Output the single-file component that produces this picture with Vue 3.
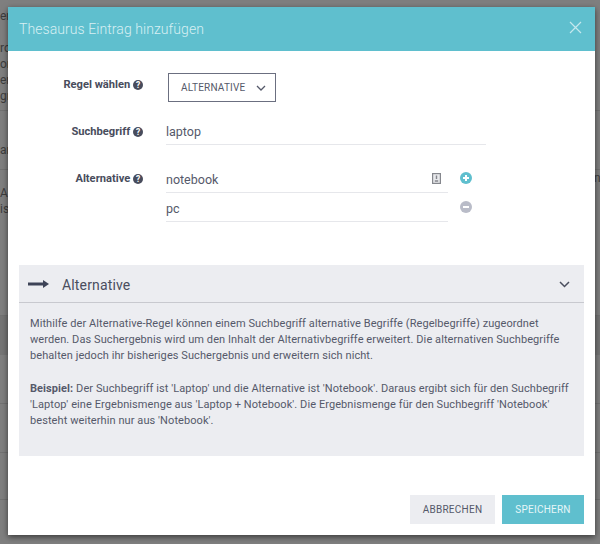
<script setup>
const rows = [
  { value: 'notebook', add: true },
  { value: 'pc', add: false },
]
</script>

<template>
  <div class="page">
    <div class="backdrop">
      <div class="bg-frag f1">en</div>
      <div class="bg-frag f2">ro<br />or<br />er<br />gr</div>
      <div class="bg-frag f3">ar</div>
      <div class="bg-frag f4">Al<br />is</div>
      <div class="bg-frag f5">n</div>
      <div class="bg-band"></div>
      <div class="bg-line l1"></div>
      <div class="bg-line l2"></div>
      <div class="bg-line l3"></div>
      <div class="bg-line l4"></div>
      <div class="bg-line l5"></div>
      <div class="bg-line l6"></div>
    </div>
    <div class="modal">
      <header class="head">
        <h1 class="title">Thesaurus Eintrag hinzufügen</h1>
        <svg class="close" width="13" height="13" viewBox="0 0 13 13">
          <path d="M1 1l11 11M12 1L1 12" fill="none" stroke="currentColor" stroke-width="1.2" />
        </svg>
      </header>
      <div class="body">
        <div class="form">
          <div class="row row-rule">
            <label class="lab">Regel wählen <span class="help">?</span></label>
            <div class="select">
              <span>ALTERNATIVE</span>
              <svg width="10" height="6" viewBox="0 0 10 6"><path d="M1 1l4 4 4-4" fill="none" stroke="currentColor" stroke-width="1.3" /></svg>
            </div>
          </div>
          <div class="row row-term">
            <label class="lab">Suchbegriff <span class="help">?</span></label>
            <div class="input wide">laptop</div>
          </div>
          <div class="row row-alt">
            <label class="lab">Alternative <span class="help">?</span></label>
            <div class="alts">
              <div v-for="r in rows" :key="r.value" class="alt">
                <div class="input narrow">
                  <span>{{ r.value }}</span>
                  <svg v-if="r.add" class="doc" width="9" height="11" viewBox="0 0 9 11">
                    <rect x="0.6" y="0.6" width="7.8" height="9.8" fill="#e8e9ec" stroke="#85878d" stroke-width="1.2" />
                    <path d="M4.5 2.5v3.5M2.8 8h3.4" stroke="#85878d" stroke-width="1.4" fill="none" />
                  </svg>
                </div>
                <span class="round" :class="r.add ? 'plus' : 'minus'">
                  <svg width="12" height="12" viewBox="0 0 12 12">
                    <circle cx="6" cy="6" r="6" fill="currentColor" />
                    <path v-if="r.add" d="M3 6h6M6 3v6" stroke="#fff" stroke-width="2" />
                    <path v-else d="M3 6h6" stroke="#fff" stroke-width="2" />
                  </svg>
                </span>
              </div>
            </div>
          </div>
        </div>
        <section class="panel">
          <div class="panel-head">
            <svg class="arrow" width="21" height="8" viewBox="0 0 21 8">
              <path d="M0 4h16" stroke="currentColor" stroke-width="3" />
              <path d="M15 0l6 4-6 4z" fill="currentColor" />
            </svg>
            <span class="panel-title">Alternative</span>
            <svg class="chev" width="11" height="7" viewBox="0 0 11 7"><path d="M1 1l4.5 4.5L10 1" fill="none" stroke="currentColor" stroke-width="1.5" /></svg>
          </div>
          <div class="panel-body">
            <p>Mithilfe der Alternative-Regel können einem Suchbegriff alternative Begriffe (Regelbegriffe) zugeordnet werden. Das Suchergebnis wird um den Inhalt der Alternativbegriffe erweitert. Die alternativen Suchbegriffe behalten jedoch ihr bisheriges Suchergebnis und erweitern sich nicht.</p>
            <p><b>Beispiel:</b> Der Suchbegriff ist 'Laptop' und die Alternative ist 'Notebook'. Daraus ergibt sich für den Suchbegriff 'Laptop' eine Ergebnismenge aus 'Laptop + Notebook'. Die Ergebnismenge für den Suchbegriff 'Notebook' besteht weiterhin nur aus 'Notebook'.</p>
          </div>
        </section>
        <footer class="foot">
          <button class="btn cancel">ABBRECHEN</button>
          <button class="btn save">SPEICHERN</button>
        </footer>
      </div>
    </div>
  </div>
</template>

<style>
html, body { margin: 0; background: #7f7f7f; }
</style>

<style scoped>
.page {
  position: relative;
  width: 600px;
  height: 544px;
  overflow: hidden;
  background: #7f7f7f;
  font-family: Roboto, "Liberation Sans", sans-serif;
  color: #4a4e5e;
  box-sizing: border-box;
  padding: 7px 5px 9px 8px;
}
.backdrop { position: absolute; inset: 0; color: #3d3d3d; font-size: 12px; line-height: 16px; }
.bg-frag { position: absolute; left: 0; }
.f1 { top: 8px; }
.f2 { top: 40px; }
.f3 { top: 142px; }
.f4 { top: 185px; }
.f5 { top: 170px; left: 594px; }
.bg-band { position: absolute; left: 0; right: 0; top: 315px; height: 40px; background: #757575; }
.bg-line { position: absolute; left: 0; right: 0; height: 1px; background: #727272; }
.l1 { top: 169px; }
.l2 { top: 315px; }
.l3 { top: 403px; }
.l4 { top: 452px; }
.l5 { top: 499px; }
.l6 { top: 110px; }

.modal {
  position: relative;
  width: 587px;
  height: 528px;
  background: #fff;
  box-shadow: 0 2px 6px rgba(0, 0, 0, 0.55);
  display: flex;
  flex-direction: column;
}
.head {
  height: 44px;
  flex: none;
  background: #5fbfce;
  color: #d7eff3;
  display: flex;
  align-items: center;
  justify-content: space-between;
  padding: 0 13px 0 11px;
  box-sizing: border-box;
}
.title { margin: 0; font-size: 14px; font-weight: 300; letter-spacing: 0.07px; }
.close { color: #c5e8ee; margin-top: -3px; }

.body { flex: 1; display: flex; flex-direction: column; padding: 0 11px 0; }
.form { height: 214px; flex: none; }
.row { display: flex; }
.lab {
  width: 124px;
  flex: none;
  text-align: right;
  font-size: 11.15px;
  font-weight: 700;
  color: #484c5c;
  white-space: nowrap;
}
.help {
  display: inline-block;
  width: 10px;
  height: 10px;
  border-radius: 50%;
  background: #484c5c;
  color: #fff;
  font-size: 8.5px;
  line-height: 10px;
  text-align: center;
  vertical-align: 0.5px;
}
.row-rule { padding-top: 22px; height: 48px; }
.row-rule .lab { padding-top: 5px; }
.select {
  margin-left: 25px;
  width: 108px;
  height: 29px;
  box-sizing: border-box;
  border: 1px solid #6b6f80;
  display: flex;
  align-items: center;
  justify-content: space-between;
  padding: 0 9px 0 12px;
  font-size: 10px;
  letter-spacing: 0.2px;
  color: #55596a;
}
.row-term { height: 47px; }
.row-term .lab { padding-top: 4px; }
.input {
  margin-left: 23px;
  border-bottom: 1px solid #e6e7eb;
  font-size: 12.5px;
  color: #55596a;
  display: flex;
  align-items: flex-start;
  justify-content: space-between;
  box-sizing: content-box;
}
.wide { width: 320px; height: 20px; padding-top: 3px; }
.row-alt .lab { padding-top: 4px; }
.alts { display: flex; flex-direction: column; gap: 4px; }
.alt { display: flex; align-items: flex-start; }
.narrow { width: 282px; height: 20px; padding-top: 4px; }
.doc { margin: 1px 7px 0 0; }
.round { margin: 4px 0 0 12px; display: flex; }
.plus { color: #5fbfce; }
.minus { color: #b9bcc8; }

.panel { background: #ecedf1; height: 191px; flex: none; }
.panel-head {
  height: 38px;
  box-sizing: border-box;
  border-bottom: 1px solid #c8c9cf;
  display: flex;
  align-items: center;
  padding: 2px 14px 0 9px;
}
.arrow { color: #3d4357; margin-right: 13px; margin-top: -2px; }
.panel-title { font-size: 14px; letter-spacing: 0.15px; flex: 1; color: #4a4e5e; }
.chev { color: #4a4e5e; }
.panel-body { padding: 13px 11px 0; font-size: 11px; line-height: 16.2px; color: #55596a; letter-spacing: 0.08px; }
.panel-body p { margin: 0 0 16px; }
.panel-body b { font-weight: 700; }

.foot { display: flex; justify-content: flex-end; gap: 7px; margin-top: 39px; }
.btn {
  height: 29px;
  border: none;
  font: 400 10px Roboto, "Liberation Sans", sans-serif;
  letter-spacing: 0.25px;
  padding: 0;
}
.cancel { width: 85px; background: #ecedf1; color: #55596a; }
.save { width: 82px; background: #5fbfce; color: #e6f6f8; }
</style>
